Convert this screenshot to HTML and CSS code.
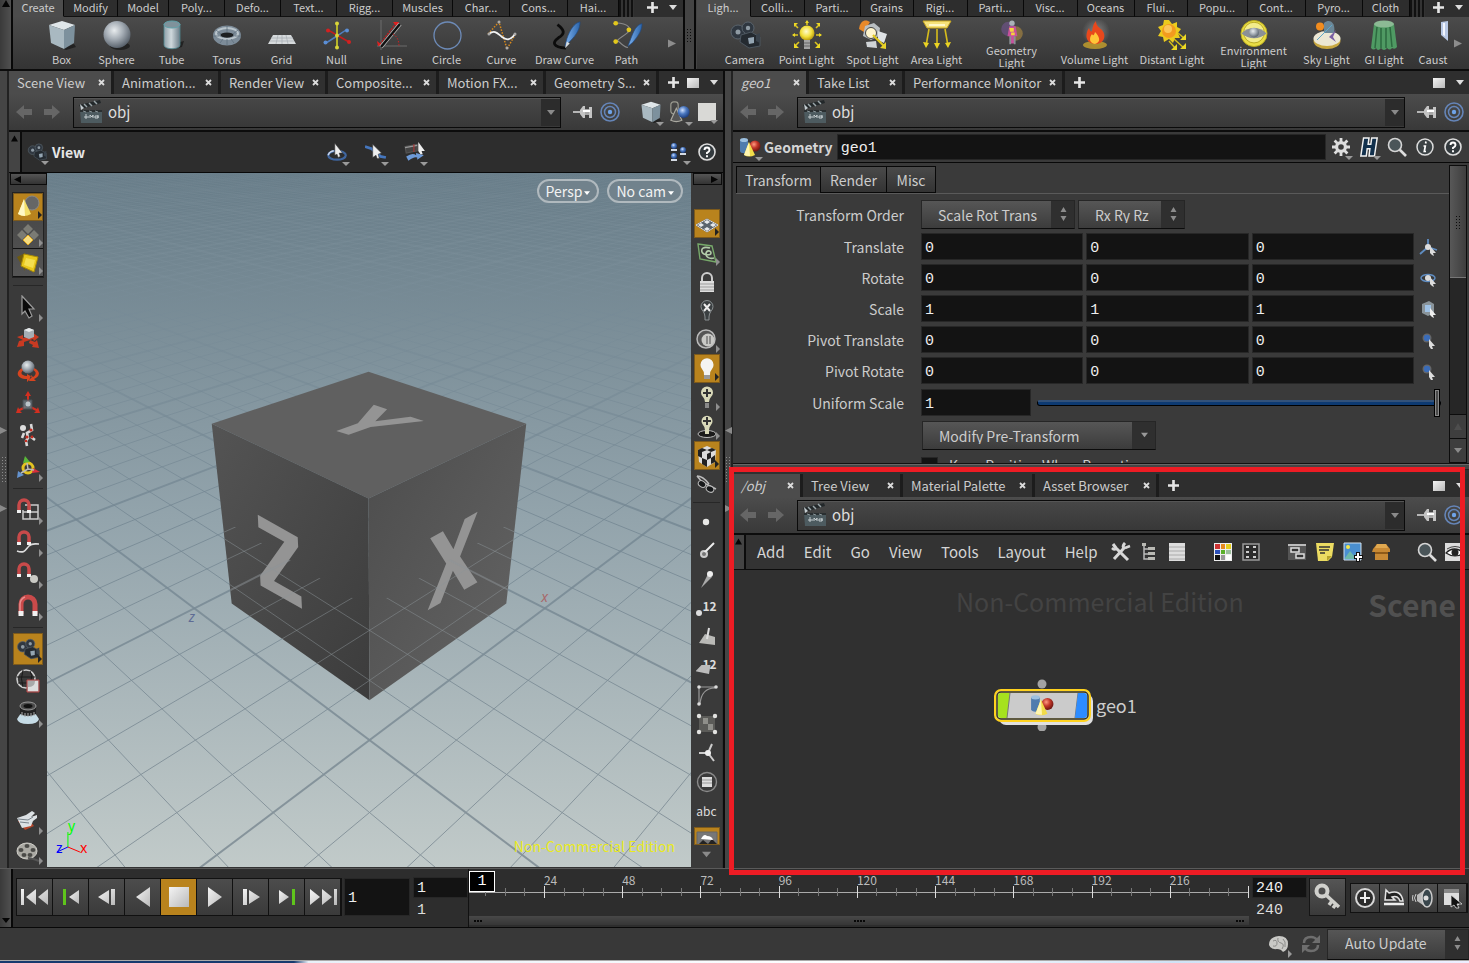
FILE: index.html
```html
<!DOCTYPE html>
<html lang="en">
<head>
<meta charset="utf-8">
<title>geo1</title>
<link rel="stylesheet" href="styles.css">
</head>
<body>
<svg class="sprite" aria-hidden="true">
<defs>
<linearGradient id="steel" x1="0" x2="1"><stop offset="0" stop-color="#8fa0a9"/><stop offset=".45" stop-color="#cfd8dc"/><stop offset="1" stop-color="#6b7d88"/></linearGradient>
<radialGradient id="ball" cx=".4" cy=".35" r=".65"><stop offset="0" stop-color="#e8ecee"/><stop offset=".5" stop-color="#a5adb5"/><stop offset="1" stop-color="#5b646e"/></radialGradient>
<radialGradient id="gold" cx=".45" cy=".4" r=".6"><stop offset="0" stop-color="#fffbd0"/><stop offset=".6" stop-color="#f2df3a"/><stop offset="1" stop-color="#b89a10"/></radialGradient>
<radialGradient id="blueball" cx=".4" cy=".35" r=".65"><stop offset="0" stop-color="#cfe0ff"/><stop offset=".5" stop-color="#4c79c0"/><stop offset="1" stop-color="#1e3f80"/></radialGradient>
<radialGradient id="redball" cx=".4" cy=".35" r=".65"><stop offset="0" stop-color="#ff9a80"/><stop offset=".5" stop-color="#c2372a"/><stop offset="1" stop-color="#6e1510"/></radialGradient>
<linearGradient id="lite" x1="0" y1="0" x2="1" y2="1"><stop offset="0" stop-color="#f4f4f4"/><stop offset="1" stop-color="#b9b9b9"/></linearGradient>
<linearGradient id="pen" x1="0" x2="1"><stop offset="0" stop-color="#7eb2ee"/><stop offset="1" stop-color="#2a63a8"/></linearGradient>
<radialGradient id="glow"><stop offset="0" stop-color="#fff" stop-opacity=".7"/><stop offset="1" stop-color="#fff" stop-opacity="0"/></radialGradient>
</defs>
<symbol id="box" viewBox="0 0 30 30"><path d="M14 28l13-4 2 3-10 3z" fill="#222"/><path d="M2 5L15 1l13 4-11 5z" fill="#dfe6e9"/><path d="M2 5l15 5v19L4 23z" fill="#a9b9c1"/><path d="M17 10l11-5-1 18-10 6z" fill="#7d919d"/></symbol>
<symbol id="sphere" viewBox="0 0 30 30"><ellipse cx="18" cy="26" rx="10" ry="4" fill="#222"/><circle cx="15" cy="14.500" r="13.500" fill="url(#ball)"/></symbol>
<symbol id="tube" viewBox="0 0 30 30"><path d="M15 24l12-3-2 6-8 2z" fill="#222"/><path d="M7 4v21c0 5 16 5 16 0V4z" fill="url(#steel)" stroke="#4e8890" stroke-width=".8"/><ellipse cx="15" cy="4.500" rx="8" ry="3.500" fill="#7f929b" stroke="#5fa0a8"/></symbol>
<symbol id="torus" viewBox="0 0 30 30"><ellipse cx="15" cy="15.500" rx="10" ry="6" fill="none" stroke="#7c8b98" stroke-width="8"/><ellipse cx="15" cy="13.500" rx="11" ry="5.500" fill="none" stroke="#b9c4cb" stroke-width="2"/><ellipse cx="15" cy="15" rx="6.500" ry="2.500" fill="#1d2022"/><path d="M4 10l5 4M15 6v6M26 10l-5 4M8 23l3-4M15 25v-6M22 23l-3-4M1 16h6M23 16h6" stroke="#5e6e7c" stroke-width=".8"/></symbol>
<symbol id="grid" viewBox="0 0 30 30"><path d="M6 15h18l5 9H1z" fill="#d6dadc"/><path d="M4 18h22M3 21h24M11 15l-2 9M15 15v9M19 15l2 9" stroke="#a9b0b5" stroke-width=".8"/></symbol>
<symbol id="null" viewBox="0 0 30 30"><path d="M4 23l11-7 9-6" stroke="#4f7fc0" stroke-width="1.500"/><path d="M6 10l21 12" stroke="#c21d1d" stroke-width="1.500"/><path d="M15 3v25" stroke="#b5b32a" stroke-width="2"/><g fill="#d8d53a"><circle cx="15" cy="3.500" r="2"/><circle cx="15" cy="27.500" r="2"/><circle cx="15" cy="15.500" r="2"/></g><g fill="#d42020"><circle cx="6" cy="10.500" r="2"/><circle cx="27" cy="22" r="2"/></g><g fill="#5b8fd6"><circle cx="3.500" cy="22.500" r="2"/><circle cx="25" cy="10.500" r="2"/></g></symbol>
<symbol id="line" viewBox="0 0 30 30"><path d="M4 0v30M0 26h30" stroke="#777" stroke-width=".8"/><path d="M3 24L20 2" stroke="#b82020" stroke-width="1.500" stroke-dasharray="2 1"/><path d="M16 2h6l-2 5zM0 21l1 5 4-1z" fill="#e02020"/><path d="M4 27L23 4" stroke="#b8b8b8" stroke-width="4"/><path d="M4 27L23 4" stroke="#111" stroke-width="2.500"/><path d="M16 14c4 2 6 7 6 12" fill="none" stroke="#c22" stroke-dasharray="1.500 1.500"/></symbol>
<symbol id="circle" viewBox="0 0 30 30"><circle cx="15.500" cy="15.500" r="13.500" fill="none" stroke="#6d8bb8" stroke-width="1.300"/></symbol>
<symbol id="curve" viewBox="0 0 30 30"><path d="M1 14L12 2l8 27 9-16" fill="none" stroke="#d98a1c" stroke-width="1.500" stroke-dasharray="1.500 1.500"/><path d="M2 14c6-5 9 0 13 3s8 4 13-3" fill="none" stroke="#f2f2f2" stroke-width="1.800"/><g fill="#aaa"><circle cx="2" cy="14" r="1.500"/><circle cx="12" cy="2" r="1.500"/><circle cx="20" cy="28" r="1.500"/><circle cx="28" cy="14" r="1.500"/></g></symbol>
<symbol id="drawcurve" viewBox="0 0 34 30"><path d="M9 4c8 6 8 10 1 14-7 5-6 10 8 11" fill="none" stroke="#0c0c0c" stroke-width="3"/><path d="M33 1c-6 1-11 9-14 18l-2 8 5-5C30 14 33 8 33 1z" fill="url(#pen)" stroke="#1f4a82" stroke-width=".7"/><path d="M17 29l2-7 3 2z" fill="#d8dde0"/></symbol>
<symbol id="path" viewBox="0 0 34 30"><path d="M5 2c14 1 18 6 12 11S5 20 8 22s7 7 10 6" fill="none" stroke="#8a8a8a" stroke-width="1.200"/><path d="M33 3c-6 1-9 8-12 16l-3 8 5-4C30 15 33 9 33 3z" fill="url(#pen)" stroke="#1f4a82" stroke-width=".7"/><g fill="#e3c81c"><circle cx="5" cy="2.500" r="2.500"/><circle cx="19" cy="9.500" r="2.500"/><circle cx="5" cy="22" r="2.500"/></g></symbol>
<symbol id="camera" viewBox="0 0 32 28"><circle cx="9" cy="11" r="7" fill="#2f3740" stroke="#59636c"/><circle cx="19" cy="7" r="6" fill="#2f3740" stroke="#59636c"/><circle cx="9" cy="11" r="2.500" fill="#8e9aa3"/><circle cx="19" cy="7" r="2.200" fill="#8e9aa3"/><path d="M12 14l10-3 9 5v9l-11 2-9-6z" fill="#242a30" stroke="#4c565f"/><path d="M19 17l6-1v6l-5 1z" fill="#94a5b2"/><path d="M27 14l4-2v10l-4-2z" fill="#39424b"/></symbol>
<symbol id="bulb" viewBox="0 0 30 30"><circle cx="15" cy="13" r="7.500" fill="url(#gold)"/><path d="M12 20h6v9h-6z" fill="#a5a5a5"/><path d="M12 23h6M12 26h6" stroke="#666"/><g stroke="#dcc520" stroke-width="1.600"><path d="M15 5V1M6 8L3 5M24 8l3-3M6 15H1M24 15h5M7 22l-4 4M23 22l4 4"/></g><path d="M13 3l2-3 2 3zM3 13l-3 2 3 2zM27 13l3 2-3 2zM2 23v5h5zM28 23v5h-5zM2 7V3h4zM28 7V3h-4z" fill="#ecd824"/></symbol>
<symbol id="spot" viewBox="0 0 30 30"><path d="M1 9C2 0 8-1 12 2L6 12z" fill="#e8892a"/><path d="M7 6l9-3 6 5-1 8-8 4-8-4z" fill="#b9bfc3"/><path d="M20 11l9 3-3 9-6-3z" fill="#dfe3e5"/><path d="M8 22l10-1 1 7-10-1z" fill="#cfd3d6"/><circle cx="13" cy="13" r="5.500" fill="#fff5cc" stroke="#444"/><path d="M15 15l12 12" stroke="#e0c81e" stroke-width="2.200"/><path d="M28 22v7l-6-1z" fill="#e8d22a"/></symbol>
<symbol id="area" viewBox="0 0 30 30"><path d="M1 1h28l-4 7H5z" fill="#f6e27a" stroke="#c9a720"/><path d="M7 4h16v2H7z" fill="#fff8c8"/><path d="M7 9L4 26M15 9v18M23 9l3 17" stroke="#d6bc1c" stroke-width="1.600"/><path d="M1 22l3 6 3-5zM12 23l3 6 3-6zM23 23l3 5 3-6z" fill="#ead324"/></symbol>
<symbol id="geolight" viewBox="0 0 30 30"><circle cx="11" cy="10" r="8" fill="#7b56a0" opacity=".5"/><circle cx="19" cy="15" r="8" fill="#c59a40" opacity=".5"/><path d="M12 7h7l2 11h-3v8h-5v-8h-3z" fill="#c7509c"/><circle cx="15" cy="3.500" r="3" fill="#aab2b8"/><path d="M12 9h5v4h-4zM14 14h4v3h-4z" fill="#f6d33c"/><path d="M12 18h2v9h-2zM17 18h2v9h-2z" fill="#8a8f94"/></symbol>
<symbol id="fire" viewBox="0 0 30 30"><circle cx="16" cy="12" r="14" fill="url(#glow)" opacity=".5"/><ellipse cx="15" cy="25" rx="12" ry="4" fill="#c8a32c" opacity=".8"/><path d="M15 24C5 23 5 14 9 8c1 3 2 4 3 3 1-4 1-7 4-10 0 5 4 7 6 9 5 6 2 14-7 14z" fill="#e8481c"/><path d="M15 24c-6-1-6-6-3-10 1 2 2 2 3-2 4 4 7 10 0 12z" fill="#ffc638"/></symbol>
<symbol id="sun" viewBox="0 0 30 30"><path d="M12 0l3 4 5-2 0 5 4 2-3 4 2 5-5 0-2 5-4-4-5 3-1-5-5-1 3-5-3-4 5-2 1-5z" fill="#eccb1d"/><circle cx="12" cy="11" r="7" fill="#f39b1f"/><circle cx="11" cy="9" r="4" fill="#fbc659"/><path d="M21 13l7 6M17 19l10 9M12 21l6 7" stroke="#d3bd18" stroke-width="1.500"/><path d="M29 14v6h-6zM29 23v6h-6zM20 24v6h-6z" fill="#ecd824"/></symbol>
<symbol id="env" viewBox="0 0 32 30"><circle cx="16" cy="15" r="14.500" fill="#e9dd45" stroke="#b9a91c"/><circle cx="16" cy="14" r="11.500" fill="#f3ec8a" stroke="#b5a620"/><path d="M2 15c8-8 20-8 28 0-8 7-20 7-28 0z" fill="#8b9096"/><circle cx="16" cy="14" r="5.500" fill="url(#ball)"/></symbol>
<symbol id="sky" viewBox="0 0 30 30"><ellipse cx="15" cy="21" rx="13.500" ry="8" fill="#c8a740"/><ellipse cx="15" cy="18.500" rx="13.500" ry="7.500" fill="#ece7d4"/><path d="M12 13V3c6-5 12 0 10 10z" fill="#6b8797"/><path d="M5 20L20 5" stroke="#5fa7c8"/><path d="M24 10l-7 7 7 5-3-5z" fill="#7b5fa3"/><circle cx="8" cy="6.500" r="4" fill="#f28c1e"/></symbol>
<symbol id="gi" viewBox="0 0 30 30"><path d="M5 4l-3 24q3 3 5 0 2 4 5 0 3 4 6 0 3 3 5 0 3 2 5-1L25 4z" fill="#4f9a63"/><path d="M8 7L6 28M12 8v20M17 8v20M21 7l2 20" stroke="#2d6a40" stroke-width="1.500"/><ellipse cx="15" cy="4" rx="10" ry="3.500" fill="#8cba95"/></symbol>
<symbol id="caustic" viewBox="0 0 16 30"><path d="M6 2v13l7 6V1z" fill="#b9c9e6"/><path d="M8 3v12l2 1V3z" fill="#f2f6ff"/></symbol>
<symbol id="plus" viewBox="0 0 10 10"><path d="M3.800 0h2.400v3.800H10v2.400H6.200V10H3.800V6.200H0V3.800h3.800z" fill="#e6e6e6"/></symbol>
<symbol id="x" viewBox="0 0 7 7"><path d="M1 1l5 5M6 1L1 6" stroke="#dcdcdc" stroke-width="1.800"/></symbol>
<symbol id="down" viewBox="0 0 8 5"><path d="M0 0h8L4 5z" fill="currentColor"/></symbol>
<symbol id="up" viewBox="0 0 8 7"><path d="M0 7h8L4 0z" fill="currentColor"/></symbol>
<symbol id="right" viewBox="0 0 8 8"><path d="M0 0l8 4-8 4z" fill="currentColor"/></symbol>
<symbol id="left" viewBox="0 0 8 8"><path d="M8 0L0 4l8 4z" fill="currentColor"/></symbol>
<symbol id="updown" viewBox="0 0 6 14"><path d="M0 5h6L3 0zM0 9h6l-3 5z" fill="#8c8c8c"/></symbol>
<symbol id="win" viewBox="0 0 12 10"><path d="M0 0h12v10H0z" fill="url(#lite)"/></symbol>
<symbol id="back" viewBox="0 0 18 18"><path d="M1 9l8-7v4h8v6H9v4z" fill="#666"/></symbol>
<symbol id="fwd" viewBox="0 0 18 18"><path d="M17 9L9 2v4H1v6h8v4z" fill="#666"/></symbol>
<symbol id="clap" viewBox="0 0 24 24"><path d="M1 10h22v13H2z" fill="#4d5b60"/><path d="M1 10h22v2H1z" fill="#2a2f31"/><path d="M0 5l21-5 1 3L2 9z" fill="#23282a"/><path d="M5 4l3 3M10 3l3 3M15 1l3 3" stroke="#9aa5a9" stroke-width="1.500"/><path d="M1 4l4 4-3 2z" fill="#c4ccd0"/><path d="M4 11l3 1M10 11l3 1M16 11l3 1" stroke="#8b979b"/><path d="M5 17h5M7 14v5M11 18v-3l2 2 1-2v3M16 16h3v2h-3zM19 15v3" stroke="#c5cdcf" fill="none"/></symbol>
<symbol id="pin" viewBox="0 0 20 16"><path d="M0 8h8" stroke="#ddd" stroke-width="1.500"/><path d="M7 6l3-4h2v12h-2l-3-4z" fill="#c4c4c4"/><path d="M12 5h4v6h-4z" fill="#a8a8a8"/><path d="M16 3h3v11h-3z" fill="#c4c4c4"/><path d="M10 6h7v2h-7z" fill="#fff"/></symbol>
<symbol id="target" viewBox="0 0 20 20"><circle cx="10" cy="10" r="9" fill="none" stroke="#6585b8" stroke-width="1.600"/><circle cx="10" cy="10" r="5.500" fill="none" stroke="#6585b8" stroke-width="1.500"/><circle cx="10" cy="10" r="2.200" fill="#6fa3e8"/></symbol>
<symbol id="shapes" viewBox="0 0 24 24"><rect x="2" y="1" width="8" height="13" rx="3" fill="none" stroke="#9a9a90" stroke-width="1.300"/><path d="M8 8l6 13q-6 3-12 0z" fill="#555" stroke="#aaa9a0" stroke-width="1.300"/><circle cx="16" cy="12" r="6.500" fill="url(#blueball)"/></symbol>
<symbol id="square" viewBox="0 0 20 20"><path d="M0 0h20v20H0z" fill="#d9d9d6"/></symbol>
<symbol id="orbit" viewBox="0 0 20 20"><ellipse cx="10" cy="13" rx="8" ry="4" fill="none" stroke="#3f66a0" stroke-width="2"/><path d="M2 13c1-4 5-4 5-4" stroke="#ccd8ec" stroke-width="1.500" fill="none"/><path d="M8 2l7 9-3 0 1 3-2 1-1-3-2 1z" fill="#eee" stroke="#333" stroke-width=".5"/></symbol>
<symbol id="pan" viewBox="0 0 20 20"><path d="M0 5l6 2 8 7 5 1" fill="none" stroke="#4576bd" stroke-width="2.500"/><path d="M7 3l8 8-3 1 1 4-2 0-1-3-3 2z" fill="#eee" stroke="#333" stroke-width=".5"/></symbol>
<symbol id="dolly" viewBox="0 0 20 20"><path d="M1 5l11-2v6L2 11z" fill="#444" stroke="#555"/><path d="M1 6l11-2" stroke="#999"/><path d="M9 3v7" stroke="#a33"/><path d="M2 14q6-4 9-1l0-2 7 2-6 4v-2q-3-1-8 3z" fill="#6d9ad8"/><path d="M13 1l6 8-3 0 1 3-2 0-2-3z" fill="#eee"/></symbol>
<symbol id="people" viewBox="0 0 20 20"><g fill="url(#blueball)"><circle cx="5" cy="4" r="3"/><circle cx="5" cy="14" r="3"/><circle cx="14" cy="8" r="3"/></g><path d="M2 7h6v2H2zM2 17h6v2H2zM11 11h6v2h-6z" fill="#d5dbe3"/></symbol>
<symbol id="help" viewBox="0 0 20 20"><circle cx="10" cy="10" r="8" fill="#333a3e" stroke="#ddd" stroke-width="1.600"/><path d="M7.500 8q0-2.500 2.500-2.500T12.500 8q0 1.500-2.500 2.800V12M10 13.200v2" fill="none" stroke="#fff" stroke-width="1.900"/></symbol>
<symbol id="info" viewBox="0 0 20 20"><circle cx="10" cy="10" r="8" fill="#3c4346" stroke="#ddd" stroke-width="1.500"/><path d="M11 4.500l-.4 2M8.500 9h1.800l-1 5.500h1.700" fill="none" stroke="#fff" stroke-width="1.700"/></symbol>
<symbol id="search" viewBox="0 0 20 20"><path d="M12 12l7 7" stroke="#ddd" stroke-width="2.600"/><circle cx="8" cy="8" r="6.500" fill="#4a5559" stroke="#d5d5d5" stroke-width="1.600"/></symbol>
<symbol id="gear" viewBox="0 0 20 20"><path d="M10 1v18M1 10h18M3.600 3.600l12.800 12.800M16.400 3.600L3.600 16.400" stroke="#dedede" stroke-width="2.800"/><circle cx="10" cy="10" r="6" fill="#dedede"/><circle cx="10" cy="10" r="2.800" fill="#3c3c3c"/></symbol>
<symbol id="hmark" viewBox="0 0 20 22"><path d="M4 1h6l-1 7h3l1-7h6l-3 20h-6l1-8H8l-1 8H1z" fill="#12304c" stroke="#f2f2f2" stroke-width="1.600"/></symbol>
<symbol id="geo" viewBox="0 0 22 20"><path d="M1 3v11c0 3 8 3 8 0V3z" fill="#4f7cae"/><ellipse cx="5" cy="3" rx="4" ry="2" fill="#9cc0e0"/><circle cx="16" cy="9" r="5.500" fill="url(#redball)"/><path d="M10 5l6 13q-6 3-11 0z" fill="#f2dc4a"/><path d="M10 5l1 14q-4 0-6-1z" fill="#fff6b0"/></symbol>
<symbol id="objmode" viewBox="0 0 24 24"><circle cx="16" cy="8" r="7" fill="#666" stroke="#888"/><path d="M8 4l7 15q-7 4-13 0z" fill="#f4df67"/><path d="M8 4l1 17q-4 0-7-2z" fill="#fff8c4"/></symbol>
<symbol id="diam" viewBox="0 0 24 24"><path d="M12 1l5 5-5 5-5-5zM6 7l5 5-5 5-5-5zM18 7l5 5-5 5-5-5z" fill="#7b7b74"/><path d="M12 12l5 5-5 5-5-5z" fill="#f6dc80" stroke="#e0a820"/></symbol>
<symbol id="ybox" viewBox="0 0 24 24"><path d="M1 6l8-4v18z" fill="#6e5b10"/><path d="M8 3l14 3-4 15-13-6z" fill="#e9c81c" stroke="#a88a08"/><path d="M10 7l9 2-2 8-9-3z" fill="#f4df50"/></symbol>
<symbol id="arrow" viewBox="0 0 24 24"><path d="M6 1l12 13-5 0 3 7-3 2-4-7-3 3z" fill="#0a0a0a" stroke="#9a9a9a" stroke-width="1.200"/></symbol>
<symbol id="move" viewBox="0 0 24 24"><path d="M1 10l6-2 0 3 10-2 0-3 6 4-5 4-1-2-9 3 0 4-7 1 2-6 4-1zM14 13l5 2 2-2 2 8-7-1 1-2-4-2z" fill="#c93a22"/><path d="M8 3l5-2 5 2v7l-5 2-5-2z" fill="#a5adb4"/><path d="M8 3l5 2 5-2-5-2z" fill="#e6eaec"/></symbol>
<symbol id="rotate" viewBox="0 0 24 24"><path d="M6 9c-8 5-4 11 5 11l0 3 5-5-5-3v2c-5 0-8-3-3-6zM18 9c8 4 5 9 0 11l2 2-7 0 2-6 2 2c3-2 4-5 0-7z" fill="#d6441f"/><circle cx="12" cy="8" r="6.500" fill="url(#ball)"/></symbol>
<symbol id="scale" viewBox="0 0 24 24"><path d="M12 0l3 5h-2v8h-2V5H9zM0 22l2-6 1 2 6-3 1 2-6 3 2 2zM24 22l-2-6-1 2-6-3-1 2 6 3-2 2z" fill="#d32f20"/><path d="M7 9h9v9H7z" fill="#6c767e" opacity=".85" stroke="#4a5258"/><circle cx="12" cy="13" r="2.500" fill="#bcc4ca"/></symbol>
<symbol id="pose" viewBox="0 0 24 24"><circle cx="7" cy="5" r="3" fill="#ddd"/><path d="M15 1l1 6-5 3 1 5-2 3 1 5M15 14l4 3M8 10l-2 5" fill="none" stroke="#d8d8d8" stroke-width="2.600"/><g fill="#c82c20"><circle cx="15" cy="7" r="1.600"/><circle cx="11" cy="14" r="1.600"/><circle cx="16" cy="14" r="1.400"/><circle cx="10" cy="18" r="1.300"/></g></symbol>
<symbol id="handles" viewBox="0 0 24 24"><circle cx="12" cy="13" r="5" fill="none" stroke="#e3c321" stroke-width="3"/><path d="M9 1l5 6-7 1z" fill="#59b839"/><path d="M24 17l-7-4-1 5z" fill="#d8313a"/><path d="M1 23l1-7 6 4z" fill="#6493cf"/><path d="M11 8l1 6-7 4M12 14l6 1" stroke="#bbb" stroke-width="1.500" fill="none"/></symbol>
<symbol id="mag" viewBox="0 0 24 24"><path d="M5 20V10a7 7 0 0 1 14 0v10" fill="none" stroke="#c94a4a" stroke-width="5"/><path d="M4 19V10a8 8 0 0 1 5-7" fill="none" stroke="#e89090" stroke-width="1.500"/><path d="M2.500 17h5v5h-5zM16.500 17h5v5h-5z" fill="#f1f1f1"/></symbol>
<symbol id="maggrid" viewBox="0 0 24 24"><path d="M9 7h13v14H7V12M7 14h15M14 7v14" fill="none" stroke="#ccc" stroke-width="1.500"/><path d="M3 13V7a5 5 0 0 1 10 0v6" fill="none" stroke="#c94a4a" stroke-width="3.500"/><path d="M1 12h4v3H1zM11 12h4v3h-4z" fill="#f1f1f1"/></symbol>
<symbol id="magcurve" viewBox="0 0 24 24"><path d="M1 21c8 3 9-2 12-5s5-2 10-2" fill="none" stroke="#ddd" stroke-width="1.600"/><path d="M3 13V7a5 5 0 0 1 10 0v6" fill="none" stroke="#c94a4a" stroke-width="3.500"/><path d="M1 12h4v3H1zM11 12h4v3h-4z" fill="#f1f1f1"/></symbol>
<symbol id="magpt" viewBox="0 0 24 24"><path d="M3 13V7a5 5 0 0 1 10 0v6" fill="none" stroke="#c94a4a" stroke-width="3.500"/><path d="M1 12h4v3H1zM11 12h4v3h-4z" fill="#f1f1f1"/><circle cx="18" cy="17" r="4" fill="#c9c9c4"/></symbol>
<symbol id="globe" viewBox="0 0 24 24"><circle cx="10" cy="10" r="9" fill="none" stroke="#ccc" stroke-width="1.600"/><path d="M1 8h18M2 14h10M7 1q-3 9 0 17M14 2q3 5 1 9" fill="none" stroke="#1a1a1a"/><path d="M11 11h12v12H11z" fill="#a9a9a9" stroke="#b44"/><path d="M12 18q7 0 7-6h3v10H12z" fill="#ddd"/></symbol>
<symbol id="lens" viewBox="0 0 24 24"><path d="M5 12h14l4 6q-1 5-11 5T1 18z" fill="#c6dce6"/><path d="M4 5v8q8 4 16 0V5z" fill="#222"/><ellipse cx="12" cy="5" rx="8" ry="4" fill="#4a4a4a" stroke="#999"/><ellipse cx="12" cy="5" rx="4.500" ry="2" fill="#111"/><path d="M6 11v4M9 12v4M12 12v4M15 12v4M18 11v4" stroke="#aaa"/></symbol>
<symbol id="flip" viewBox="0 0 24 24"><path d="M2 12l7 9 9-4-7-9z" fill="#b3452a"/><path d="M1 9l9-3 6-4 3 2-4 4 6-2 0 3-4 3-2 5-9 2z" fill="#dce1e4"/><path d="M2 10l10 1 5-3M4 13l9 1" stroke="#78828a" fill="none"/></symbol>
<symbol id="reel" viewBox="0 0 24 24"><ellipse cx="11" cy="12" rx="10" ry="8" fill="#aaa9a3" stroke="#d0cfc9"/><path d="M12 19q7 1 11 3" stroke="#555" stroke-width="2"/><g fill="#4b4b48"><ellipse cx="11" cy="7" rx="2.500" ry="2"/><ellipse cx="5" cy="11" rx="2.500" ry="2"/><ellipse cx="17" cy="11" rx="2.500" ry="2"/><ellipse cx="8" cy="16" rx="2.500" ry="2"/><ellipse cx="14" cy="16" rx="2.500" ry="2"/></g></symbol>
<symbol id="plane" viewBox="0 0 24 24"><path d="M12 7l11 6-11 7-11-7z" fill="#5a646d" stroke="#222"/><path d="M12 8l3 2-3 2-3-2zM6 11l3 2-3 2-3-2zM18 11l3 2-3 2-3-2zM12 15l3 2-3 2-3-2z" fill="#e8eaec"/><path d="M12 7l11 6-11 7-11-7z" fill="none" stroke="#e4e4e4"/></symbol>
<symbol id="cgrid" viewBox="0 0 24 24"><path d="M3 3l14 2 4 16-16-3z" fill="none" stroke="#77a96a" stroke-width="1.400"/><path d="M15 7c-7-2-9 1-8 4s9 4 9 1-5-3-5 1 5 5 8 4" fill="none" stroke="#b2cbaa" stroke-width="1.600"/></symbol>
<symbol id="lock" viewBox="0 0 24 24"><path d="M7 12V8a5 5 0 0 1 10 0v4" fill="none" stroke="#ccc" stroke-width="2"/><path d="M5 11h14v11H5z" fill="#dedede"/><path d="M5 14h14M5 17h14M5 20h14" stroke="#9d9d9d"/></symbol>
<symbol id="bulboff" viewBox="0 0 24 24"><path d="M10 18q0-3-2-6a6 6 0 1 1 8 0q-2 3-2 6v3h-4z" fill="#3a3f41" stroke="#8a9092"/><path d="M9 5l6 7M15 5l-6 7" stroke="#eee" stroke-width="2"/></symbol>
<symbol id="disc" viewBox="0 0 24 24"><circle cx="11" cy="11" r="9" fill="#555" stroke="#b9b9b9" stroke-width="1.500"/><circle cx="13" cy="12" r="6.500" fill="#c9c9c6"/><path d="M12 8v8M15 8v8" stroke="#777" stroke-width="1.500"/></symbol>
<symbol id="bulbon" viewBox="0 0 24 24"><path d="M9 18q0-4-2-6a6.500 6.500 0 1 1 10 0q-2 2-2 6z" fill="#f4f4f2"/><path d="M9 18h6v4H9z" fill="#999"/></symbol>
<symbol id="bulbplus" viewBox="0 0 24 24"><path d="M10 16q0-3-2-5a6 6 0 1 1 8 0q-2 2-2 5z" fill="#d8d8b8"/><path d="M10 17h4v5h-4z" fill="#888"/><path d="M12 3v8M8 7h8" stroke="#333" stroke-width="2"/></symbol>
<symbol id="bulbring" viewBox="0 0 24 24"><ellipse cx="12" cy="19" rx="9" ry="3.500" fill="#1a1a1a" stroke="#bbb"/><path d="M10 15q0-3-2-5a5.500 5.500 0 1 1 8 0q-2 2-2 5v4h-4z" fill="#d8d8b8"/><path d="M12 2v8M8 6h8" stroke="#333" stroke-width="2"/></symbol>
<symbol id="checker" viewBox="0 0 24 24"><path d="M3 6l9-4 9 4-1 12-8 5-8-5z" fill="#ddd"/><path d="M3 6l4 2v6l-4-2zM7 14l5 2v7l-5-3zM12 10l4-2v6l-4 2zM16 14l4-3v7l-4 2zM7 4l5 2 5-2 4 2-5 2-4-2-5 2-4-2z" fill="#222"/></symbol>
<symbol id="glasses" viewBox="0 0 24 24"><path d="M2 3l5 6 14 7M2 3q6 0 12 8" fill="none" stroke="#bbb" stroke-width="1.500"/><ellipse cx="7" cy="11" rx="4" ry="3" fill="#16181a" stroke="#bbb" transform="rotate(35 7 11)"/><ellipse cx="15" cy="16" rx="4" ry="3" fill="#16181a" stroke="#bbb" transform="rotate(25 15 16)"/></symbol>
<symbol id="pt" viewBox="0 0 24 24"><circle cx="11" cy="13" r="3.200" fill="#e8e8e6"/></symbol>
<symbol id="norm" viewBox="0 0 24 24"><circle cx="9" cy="16" r="4" fill="#ccc"/><path d="M8 16L19 5" stroke="#eee" stroke-width="2"/><circle cx="9" cy="16" r="2" fill="#777"/></symbol>
<symbol id="vel" viewBox="0 0 24 24"><path d="M6 21L13 7l4 3z" fill="#aaa"/><circle cx="15" cy="7" r="3" fill="#eee"/></symbol>
<symbol id="prim" viewBox="0 0 24 24"><path d="M4 18l6-9 10 3v8z" fill="#b9b9b6"/><path d="M12 14l2-11" stroke="#ddd" stroke-width="2"/></symbol>
<symbol id="edge" viewBox="0 0 24 24"><path d="M4 22V4h17M5 21C6 10 12 5 20 5" fill="none" stroke="#999" stroke-width="1.200"/><circle cx="4" cy="4" r="1.800" fill="#ddd"/><circle cx="21" cy="4" r="1.800" fill="#ddd"/><circle cx="4" cy="21" r="1.800" fill="#ddd"/></symbol>
<symbol id="uv" viewBox="0 0 24 24"><path d="M4 4h16v16H4z" fill="#5b5b58"/><path d="M8 6h5v6H8zM13 12h5v6h-5z" fill="#8f8f8a"/><g fill="#e2e2e0"><circle cx="4" cy="4" r="2.200"/><circle cx="20" cy="4" r="2.200"/><circle cx="4" cy="20" r="2.200"/><circle cx="20" cy="20" r="2.200"/></g></symbol>
<symbol id="tri" viewBox="0 0 24 24"><path d="M13 12L17 3M13 12H4M13 12l6 8" stroke="#ccc" stroke-width="2"/><circle cx="13" cy="12" r="3" fill="#eee"/></symbol>
<symbol id="film" viewBox="0 0 24 24"><circle cx="12" cy="12" r="9.500" fill="none" stroke="#8a8a8a" stroke-width="1.400"/><path d="M7 7h10v10H7z" fill="#ddd"/><path d="M7 10h10M7 13h10" stroke="#999"/></symbol>
<symbol id="photo" viewBox="0 0 24 24"><path d="M2 4h20v20H2z" fill="#777" stroke="#666"/><path d="M3 17l5-5 5 4 4-5 5 5v8H3z" fill="#222"/><path d="M6 11q3-6 6-3 5 0 6 4z" fill="#fff"/></symbol>
<symbol id="taxis" viewBox="0 0 20 20"><path d="M10 2v8l-8 7M10 10l9 3" fill="none" stroke="#5f8cc0" stroke-width="1.800"/><circle cx="10" cy="10" r="3" fill="#ddd"/><path d="M12 9l6 7-3 0 1 3-2-1-2-2z" fill="#ddd"/></symbol>
<symbol id="tring" viewBox="0 0 20 20"><ellipse cx="10" cy="10" rx="7" ry="3.500" fill="none" stroke="#5f8cc0" stroke-width="1.500"/><circle cx="10" cy="10" r="3" fill="#ddd"/><path d="M12 9l6 7-3 0 1 3-2-1-2-2z" fill="#ddd"/></symbol>
<symbol id="tbox" viewBox="0 0 20 20"><path d="M4 5l7-3 5 3v9l-6 3-6-3z" fill="#8a949a"/><path d="M7 6h6v7H7z" fill="#9fc2e6"/><path d="M12 9l6 7-3 0 1 3-2-1-2-2z" fill="#eee"/></symbol>
<symbol id="tpiv" viewBox="0 0 20 20"><circle cx="9" cy="8" r="4.500" fill="#666"/><circle cx="9" cy="8" r="3.200" fill="#3a6cb8"/><path d="M11 9l6 7-3 0 1 3-2 0-2-3z" fill="#ddd"/></symbol>
<symbol id="tools" viewBox="0 0 20 20"><path d="M2 2l3 4 12 12M14 1q-3 3-1 5L3 17" fill="none" stroke="#d8d8d8" stroke-width="3"/><path d="M14 6l5-2M1 6q3 3 5 0" stroke="#d8d8d8" stroke-width="2.500" fill="none"/></symbol>
<symbol id="tree" viewBox="0 0 20 20"><path d="M5 2v15h5M5 7h5M5 12h5" stroke="#bbb" stroke-width="1.500" fill="none"/><path d="M3 1h4v3H3zM9 5h7v3H9zM9 10h7v3H9zM9 15h7v3H9z" fill="#b9b9b4"/></symbol>
<symbol id="list" viewBox="0 0 20 20"><path d="M2 1h16v18H2z" fill="#ddd"/><path d="M2 5h16M2 9h16M2 13h16M2 17h16" stroke="#aaa"/></symbol>
<symbol id="palette" viewBox="0 0 20 20"><path d="M1 1h18v18H1z" fill="#eee"/><path d="M2 2h5v5H2z" fill="#c33"/><path d="M8 2h4v5H8z" fill="#e58a1e"/><path d="M13 2h5v5h-5z" fill="#e5cf1e"/><path d="M2 8h5v4H2z" fill="#2b4fb8"/><path d="M8 8h4v4H8z" fill="#5ab02a"/><path d="M13 8h5v4h-5z" fill="#9bbf9b"/><path d="M2 13h5v5H2z" fill="#111"/><path d="M8 13h4v5H8z" fill="#999"/><path d="M13 13h5v5h-5z" fill="#fff"/></symbol>
<symbol id="table" viewBox="0 0 20 20"><path d="M2 2h16v16H2z" fill="#2b2b2b" stroke="#999" stroke-width="1.500"/><path d="M5 5h3M12 5h3M5 10h3M12 10h3M5 15h3M12 15h3" stroke="#ccc" stroke-width="2"/></symbol>
<symbol id="netbox" viewBox="0 0 20 20"><path d="M1 2h18v16H1z" fill="#555"/><path d="M1 2h18v2H1z" fill="#bbb"/><path d="M4 6h8v4H4zM9 12h8v4H9z" fill="#333" stroke="#ddd" stroke-width="1.500"/></symbol>
<symbol id="note" viewBox="0 0 20 20"><path d="M1 1h18l-2 14-4 4H3z" fill="#ecdc62"/><path d="M17 14l-5 0 0 5z" fill="#b6a32a"/><path d="M4 5h11M4 8h10M5 11h5" stroke="#333" stroke-width="1.500"/></symbol>
<symbol id="pic" viewBox="0 0 20 20"><path d="M1 1h17v17H1z" fill="#4a8fd0" stroke="#cfe0ee"/><path d="M2 16l5-7 4 5 3-4 4 6v1H2z" fill="#6db8a8"/><circle cx="5" cy="5" r="2" fill="#f4e84a"/><path d="M15 10v10M11 15h9" stroke="#111" stroke-width="4"/><path d="M15 11v8M12 15h7" stroke="#fff" stroke-width="2"/></symbol>
<symbol id="package" viewBox="0 0 20 20"><path d="M2 7l4-5h9l4 5v3h-2v8H4v-8H1z" fill="#c98a35"/><path d="M6 2h9l2 4H4z" fill="#e0a850"/><path d="M4 10h13v2H4z" fill="#8f5a18"/></symbol>
<symbol id="eye" viewBox="0 0 20 20"><path d="M0 1h20v18H0z" fill="#ddd"/><path d="M1 11q8-8 18 0-9 6-18 0z" fill="#fff" stroke="#222" stroke-width="1.200"/><path d="M2 7q8-5 16 0" fill="none" stroke="#444"/><circle cx="10" cy="10.500" r="3.500" fill="#222"/></symbol>
<symbol id="p-first" viewBox="0 0 30 24"><path d="M1 4h3v16H1zM16 4v16L6 12zM28 4v16l-10-8z" fill="url(#lite)"/></symbol>
<symbol id="p-prevkey" viewBox="0 0 30 24"><path d="M7 4h3v16H7z" fill="#5fc41c"/><path d="M23 5v14l-10-7z" fill="url(#lite)"/></symbol>
<symbol id="p-stepb" viewBox="0 0 30 24"><path d="M17 5v14L6 12zM19 4h4v16h-4z" fill="url(#lite)"/></symbol>
<symbol id="p-playb" viewBox="0 0 30 24"><path d="M22 2v20L8 12z" fill="url(#lite)"/></symbol>
<symbol id="p-stop" viewBox="0 0 30 24"><path d="M5 2h20v20H5z" fill="url(#lite)"/></symbol>
<symbol id="p-play" viewBox="0 0 30 24"><path d="M8 2v20l14-10z" fill="url(#lite)"/></symbol>
<symbol id="p-stepf" viewBox="0 0 30 24"><path d="M13 5v14l11-7zM7 4h4v16H7z" fill="url(#lite)"/></symbol>
<symbol id="p-nextkey" viewBox="0 0 30 24"><path d="M20 4h3v16h-3z" fill="#5fc41c"/><path d="M7 5v14l10-7z" fill="url(#lite)"/></symbol>
<symbol id="p-last" viewBox="0 0 30 24"><path d="M26 4h3v16h-3zM14 4v16l10-8zM2 4v16l10-8z" fill="url(#lite)"/></symbol>
<symbol id="key" viewBox="0 0 28 28"><circle cx="8" cy="8" r="5.500" fill="none" stroke="#d0d0cc" stroke-width="4"/><path d="M12 12l13 12M18 18l-3 4M22 21l-3 4" stroke="#d0d0cc" stroke-width="3.500"/></symbol>
<symbol id="clock" viewBox="0 0 22 22"><circle cx="11" cy="11" r="9" fill="#2c2c2c" stroke="#d8d8d8" stroke-width="2"/><path d="M11 5v11M6 11h10" stroke="#eee" stroke-width="2"/></symbol>
<symbol id="undo" viewBox="0 0 22 22"><path d="M2 13h10L9 10q6-2 8 4h3Q18 2 6 6L3 3z" fill="#222" stroke="#e2e2e2" stroke-width="1.500"/><path d="M1 17h20" stroke="#eee" stroke-width="2.500"/></symbol>
<symbol id="speaker" viewBox="0 0 22 22"><path d="M5 8l9-6v18l-9-6z" fill="#bbb"/><ellipse cx="15" cy="11" rx="5" ry="9" fill="#39464c" stroke="#ccc" stroke-width="1.500"/><circle cx="14" cy="11" r="2.500" fill="#ddd"/><path d="M4 7q-3 4 0 8M1 8q-1 3 0 6" stroke="#ccc" fill="none"/></symbol>
<symbol id="panel" viewBox="0 0 22 22"><path d="M3 2h15v16H3z" fill="#ddd"/><path d="M3 2h15v4H3z" fill="#888"/><path d="M10 8l11 9-5 0 2 4-3 0-2-3-3 2z" fill="#111" stroke="#ddd" stroke-width=".8"/></symbol>
<symbol id="brain" viewBox="0 0 22 18"><path d="M1 10Q1 2 11 1q9 0 9 8 0 6-5 8-2-3-6-3-6 1-8-4z" fill="#c9c9c6"/><path d="M5 6q4-2 4 2T5 11M10 3q-1 4 3 5t1 6M15 4q3 2 2 8" stroke="#8a8a88" fill="none"/></symbol>
<symbol id="refresh" viewBox="0 0 20 20"><path d="M3 9q0-6 7-6 4 0 6 3M17 11q0 6-7 6-4 0-6-3" fill="none" stroke="#6e6e6e" stroke-width="2.500"/><path d="M19 1v8h-8zM1 19v-8h8z" fill="#6e6e6e"/></symbol>
</svg>

<header class="shelves">
  <div class="edge"><svg class="a8 dark"><use href="#up"/></svg></div>
  <section class="shelf shelf-a">
    <nav class="stabs">
      <button class="on w51">Create</button><button class="w54">Modify</button><button class="w51">Model</button><button class="w56">Poly...</button><button class="w56">Defo...</button><button class="w56">Text...</button><button class="w56">Rigg...</button><button class="w60">Muscles</button><button class="w57">Char...</button><button class="w58">Cons...</button><button class="w51">Hai...</button><i class="ridge"></i>
      <span class="sadd"><svg class="a10"><use href="#plus"/></svg><svg class="tri"><use href="#down"/></svg></span>
    </nav>
    <div class="tools tools-a">
      <button><svg><use href="#box"/></svg>Box</button><button><svg><use href="#sphere"/></svg>Sphere</button><button><svg><use href="#tube"/></svg>Tube</button><button><svg><use href="#torus"/></svg>Torus</button><button><svg><use href="#grid"/></svg>Grid</button><button><svg><use href="#null"/></svg>Null</button><button><svg><use href="#line"/></svg>Line</button><button><svg><use href="#circle"/></svg>Circle</button><button><svg><use href="#curve"/></svg>Curve</button><button><svg><use href="#drawcurve"/></svg>Draw Curve</button><button><svg><use href="#path"/></svg>Path</button>
      <svg class="more"><use href="#right"/></svg>
    </div>
  </section>
  <div class="grip"><i class="dots"></i></div>
  <section class="shelf shelf-b">
    <nav class="stabs">
      <button class="on w54">Ligh...</button><button class="w54">Colli...</button><button class="w56">Parti...</button><button class="w53">Grains</button><button class="w54">Rigi...</button><button class="w56">Parti...</button><button class="w54">Visc...</button><button class="w57">Oceans</button><button class="w53">Flui...</button><button class="w60">Popu...</button><button class="w58">Cont...</button><button class="w57">Pyro...</button><button class="w47">Cloth</button><i class="ridge"></i>
      <span class="sadd"><svg class="a10"><use href="#plus"/></svg><svg class="tri"><use href="#down"/></svg></span>
    </nav>
    <div class="tools tools-b">
      <button><svg><use href="#camera"/></svg>Camera</button><button><svg><use href="#bulb"/></svg>Point Light</button><button><svg><use href="#spot"/></svg>Spot Light</button><button><svg><use href="#area"/></svg>Area Light</button><button class="two"><svg><use href="#geolight"/></svg><span>Geometry<br>Light</span></button><button><svg><use href="#fire"/></svg>Volume Light</button><button><svg><use href="#sun"/></svg>Distant Light</button><button class="two"><svg><use href="#env"/></svg><span>Environment<br>Light</span></button><button><svg><use href="#sky"/></svg>Sky Light</button><button><svg><use href="#gi"/></svg>GI Light</button><button class="cut"><svg><use href="#caustic"/></svg>Caust</button>
      <svg class="more"><use href="#right"/></svg>
    </div>
  </section>
</header>

<main class="desk">
  <div class="rail"><svg class="a6"><use href="#right"/></svg><i class="dots pale"></i><svg class="a6"><use href="#right"/></svg></div>
  <section class="pane scene">
    <nav class="ptabs">
      <button class="on w104">Scene View<svg><use href="#x"/></svg></button><button class="w107">Animation...<svg><use href="#x"/></svg></button><button class="w107">Render View<svg><use href="#x"/></svg></button><button class="w111">Composite...<svg><use href="#x"/></svg></button><button class="w107">Motion FX...<svg><use href="#x"/></svg></button><button class="w113">Geometry S...<svg><use href="#x"/></svg></button><svg class="add"><use href="#plus"/></svg>
      <span class="wins"><svg class="win"><use href="#win"/></svg><svg class="tri"><use href="#down"/></svg></span>
    </nav>
    <div class="pathbar">
      <svg class="nav"><use href="#back"/></svg><svg class="nav"><use href="#fwd"/></svg>
      <button class="path"><svg class="clap"><use href="#clap"/></svg>obj<span class="drop"><svg class="tri"><use href="#down"/></svg></span></button>
      <svg class="i20 pin"><use href="#pin"/></svg><svg class="i20"><use href="#target"/></svg>
      <span class="vicons"><span class="m"><svg class="i22"><use href="#box"/></svg></span><span class="m"><svg class="i22"><use href="#shapes"/></svg></span><span class="m"><svg class="i18"><use href="#square"/></svg></span></span>
    </div>
    <div class="viewbar">
      <div class="grip2"><svg class="a6 dark"><use href="#up"/></svg></div>
      <span class="m cam"><svg class="i20"><use href="#camera"/></svg></span><b>View</b>
      <span class="mid"><span class="m"><svg class="i22"><use href="#orbit"/></svg></span><span class="m"><svg class="i22"><use href="#pan"/></svg></span><span class="m"><svg class="i22"><use href="#dolly"/></svg></span></span>
      <span class="m"><svg class="i20"><use href="#people"/></svg></span><svg class="i20"><use href="#help"/></svg>
    </div>
    <div class="stage">
      <div class="tbar ltb">
        <div class="head"><svg class="a6 dark"><use href="#left"/></svg></div>
        <div class="modes"><button class="act s"><svg><use href="#objmode"/></svg></button><button class="s"><svg><use href="#diam"/></svg></button><button class="s"><svg><use href="#ybox"/></svg></button></div>
        <hr>
        <button class="s"><svg><use href="#arrow"/></svg></button><button><svg><use href="#move"/></svg></button><button><svg><use href="#rotate"/></svg></button><button><svg><use href="#scale"/></svg></button><button><svg><use href="#pose"/></svg></button><button class="s"><svg><use href="#handles"/></svg></button>
        <hr>
        <button class="s"><svg><use href="#maggrid"/></svg></button><button class="s"><svg><use href="#magcurve"/></svg></button><button class="s"><svg><use href="#magpt"/></svg></button><button class="s"><svg><use href="#mag"/></svg></button>
        <hr>
        <button class="act s"><svg><use href="#camera"/></svg></button><button><svg><use href="#globe"/></svg></button><button class="s"><svg><use href="#lens"/></svg></button>
        <div class="low"><button class="s"><svg><use href="#flip"/></svg></button><button class="s"><svg><use href="#reel"/></svg></button></div>
      </div>
      <div class="view">
        <svg class="scene3d" viewBox="0 0 645 695" preserveAspectRatio="xMidYMid slice">
          <defs>
            <linearGradient id="skyg" x1="0" y1="0" x2="0" y2="1"><stop offset="0" stop-color="#677c88"/><stop offset=".5" stop-color="#93a4ac"/><stop offset="1" stop-color="#c1cac9"/></linearGradient>
            <linearGradient id="gline" gradientUnits="userSpaceOnUse" x1="0" y1="0" x2="0" y2="695"><stop offset="0" stop-color="#8fa0aa" stop-opacity=".06"/><stop offset=".2" stop-color="#768a96" stop-opacity=".4"/><stop offset=".5" stop-color="#738692" stop-opacity=".8"/><stop offset="1" stop-color="#87949b"/></linearGradient>
            <linearGradient id="fz" x1="0" y1="0" x2="1" y2="1"><stop offset="0" stop-color="#545454"/><stop offset="1" stop-color="#3c3c3c"/></linearGradient>
            <linearGradient id="fx" x1="0" y1="0" x2="1" y2="1"><stop offset="0" stop-color="#4c4c4c"/><stop offset="1" stop-color="#656565"/></linearGradient>
            <clipPath id="front"><path d="M176 347l147 89 147-89-10 84-137 97-138-97z"/></clipPath>
          </defs>
          <rect width="645" height="695" fill="url(#skyg)"/>
          <g id="ground" stroke="url(#gline)"></g>
          <path d="M322 199l158 52-158 75-157-75z" fill="#606060"/>
          <path d="M165 251l157 75 1 202-138-97z" fill="url(#fz)"/>
          <path d="M480 251l-158 75 1 202 137-97z" fill="url(#fx)"/>
          <g class="faces">
            <text transform="matrix(.8 .26 -.79 .28 271 252)">Y</text>
            <text transform="matrix(.78 .44 .05 1 212 412)">Z</text>
            <text transform="matrix(.75 -.42 -.02 1 381 438)">X</text>
          </g>
          <g id="over" clip-path="url(#front)" stroke="#8d9498" stroke-opacity=".5"></g>
          <g class="marks"><text x="142" y="450" fill="#5e6b94">z</text><text x="495" y="430" fill="#a8686a">x</text></g>
          <g class="axes"><path d="M21 675V660" stroke="#0f0"/><path d="M21 675l12 5" stroke="#f00"/><path d="M21 675l-11 5" stroke="#00f"/><text x="21" y="659" fill="#0f0">y</text><text x="33" y="681" fill="#f00">x</text><text x="9" y="681" fill="#00f">z</text></g>
        </svg>
        <div class="cams"><button>Persp<svg><use href="#down"/></svg></button><button>No cam<svg><use href="#down"/></svg></button></div>
        <span class="nc">Non-Commercial Edition</span>
      </div>
      <div class="tbar rtb">
        <div class="head r"><svg class="a6 dark"><use href="#right"/></svg></div>
        <button class="act s"><svg><use href="#plane"/></svg></button><button class="s"><svg><use href="#cgrid"/></svg></button><button><svg><use href="#lock"/></svg></button><button><svg><use href="#bulboff"/></svg></button><button class="s"><svg><use href="#disc"/></svg></button><button class="act s"><svg><use href="#bulbon"/></svg></button><button class="s"><svg><use href="#bulbplus"/></svg></button><button class="s"><svg><use href="#bulbring"/></svg></button><button class="act s"><svg><use href="#checker"/></svg></button><button><svg><use href="#glasses"/></svg></button>
        <hr>
        <button><svg><use href="#pt"/></svg></button><button><svg><use href="#norm"/></svg></button><button><svg><use href="#vel"/></svg></button><button class="num">12</button><button><svg><use href="#prim"/></svg></button><button class="num tile">12</button><button><svg><use href="#edge"/></svg></button><button><svg><use href="#uv"/></svg></button><button><svg><use href="#tri"/></svg></button><button><svg><use href="#film"/></svg></button><button class="abc">abc</button>
        <button class="act clip"><svg><use href="#photo"/></svg></button>
        <svg class="tri grey"><use href="#down"/></svg>
      </div>
    </div>
  </section>
  <div class="rail mid-rail"><svg class="a6"><use href="#left"/></svg><i class="dots pale"></i><svg class="a6"><use href="#right"/></svg></div>
  <div class="rightcol">
    <section class="pane params">
      <nav class="ptabs">
        <button class="on w76"><em>geo1</em><svg><use href="#x"/></svg></button><button class="w96">Take List<svg><use href="#x"/></svg></button><button class="w160">Performance Monitor<svg><use href="#x"/></svg></button><svg class="add"><use href="#plus"/></svg>
        <span class="wins"><svg class="win"><use href="#win"/></svg><svg class="tri"><use href="#down"/></svg></span>
      </nav>
      <div class="pathbar">
        <svg class="nav"><use href="#back"/></svg><svg class="nav"><use href="#fwd"/></svg>
        <button class="path"><svg class="clap"><use href="#clap"/></svg>obj<span class="drop"><svg class="tri"><use href="#down"/></svg></span></button>
        <svg class="i20 pin"><use href="#pin"/></svg><svg class="i20"><use href="#target"/></svg>
      </div>
      <div class="nodehead">
        <span class="m"><svg class="i22"><use href="#geo"/></svg></span><label for="nodename">Geometry</label><input id="nodename" value="geo1">
        <span class="m"><svg class="i20"><use href="#gear"/></svg></span><span class="m"><svg class="i20"><use href="#hmark"/></svg></span><svg class="i20"><use href="#search"/></svg><svg class="i20"><use href="#info"/></svg><svg class="i20"><use href="#help"/></svg>
      </div>
      <div class="pbody">
        <div class="pmain">
          <nav class="ftabs"><button class="on w86">Transform</button><button class="w66">Render</button><button class="w48">Misc</button></nav>
          <form class="fields">
            <div class="row tall"><label for="xo">Transform Order</label><span class="sel s154"><select id="xo"><option>Scale Rot Trans</option></select><svg><use href="#updown"/></svg></span><span class="sel s106"><select aria-label="Rotate order"><option>Rx Ry Rz</option></select><svg><use href="#updown"/></svg></span></div>
            <div class="row"><label for="t1">Translate</label><input id="t1" value="0"><input value="0" aria-label="Translate Y"><input value="0" aria-label="Translate Z"><svg><use href="#taxis"/></svg></div>
            <div class="row"><label for="r1">Rotate</label><input id="r1" value="0"><input value="0" aria-label="Rotate Y"><input value="0" aria-label="Rotate Z"><svg><use href="#tring"/></svg></div>
            <div class="row"><label for="s1">Scale</label><input id="s1" value="1"><input value="1" aria-label="Scale Y"><input value="1" aria-label="Scale Z"><svg><use href="#tbox"/></svg></div>
            <div class="row"><label for="pt1">Pivot Translate</label><input id="pt1" value="0"><input value="0" aria-label="Pivot Translate Y"><input value="0" aria-label="Pivot Translate Z"><svg><use href="#tpiv"/></svg></div>
            <div class="row"><label for="pr1">Pivot Rotate</label><input id="pr1" value="0"><input value="0" aria-label="Pivot Rotate Y"><input value="0" aria-label="Pivot Rotate Z"><svg><use href="#tpiv"/></svg></div>
            <div class="row tall"><label for="us">Uniform Scale</label><input id="us" class="short" value="1"><input type="range" min="0" max="1" step=".1" value="1" aria-label="Uniform Scale slider"></div>
            <div class="row tall"><label></label><span class="sel s234 menu"><select aria-label="Modify Pre-Transform"><option>Modify Pre-Transform</option></select><svg class="tri"><use href="#down"/></svg></span></div>
            <div class="row last"><label></label><input type="checkbox" id="keep"><label class="keep" for="keep">Keep Position When Parenting</label></div>
          </form>
        </div>
        <div class="scroll"><div class="thumb"><i class="dots"></i></div><div class="track"></div><div class="sb dim"><svg class="a8"><use href="#up"/></svg></div><div class="sb"><svg class="a8"><use href="#down"/></svg></div></div>
      </div>
    </section>
    <div class="hsplit"></div>
    <section class="pane network">
      <nav class="ptabs">
        <button class="on w70"><em>/obj</em><svg><use href="#x"/></svg></button><button class="w100">Tree View<svg><use href="#x"/></svg></button><button class="w132">Material Palette<svg><use href="#x"/></svg></button><button class="w124">Asset Browser<svg><use href="#x"/></svg></button><svg class="add"><use href="#plus"/></svg>
        <span class="wins"><svg class="win"><use href="#win"/></svg><svg class="tri"><use href="#down"/></svg></span>
      </nav>
      <div class="pathbar">
        <svg class="nav"><use href="#back"/></svg><svg class="nav"><use href="#fwd"/></svg>
        <button class="path"><svg class="clap"><use href="#clap"/></svg>obj<span class="drop"><svg class="tri"><use href="#down"/></svg></span></button>
        <svg class="i20 pin"><use href="#pin"/></svg><svg class="i20"><use href="#target"/></svg>
      </div>
      <div class="menubar">
        <div class="grip2"><svg class="a6 dark"><use href="#up"/></svg></div>
        <button>Add</button><button>Edit</button><button>Go</button><button>View</button><button>Tools</button><button>Layout</button><button>Help</button>
        <span class="ic"><svg><use href="#tools"/></svg><svg><use href="#tree"/></svg><svg><use href="#list"/></svg></span><span class="ic"><svg><use href="#palette"/></svg><svg><use href="#table"/></svg></span><span class="ic"><svg><use href="#netbox"/></svg><svg><use href="#note"/></svg><svg><use href="#pic"/></svg><svg><use href="#package"/></svg></span><span class="ic"><svg><use href="#search"/></svg><svg><use href="#eye"/></svg></span>
      </div>
      <div class="canvas">
        <span class="wm">Non-Commercial Edition</span><b class="wm2">Scene</b>
        <div class="node">
          <svg viewBox="0 0 102 52"><circle cx="50" cy="5" r="4.500" fill="#a3a3a3"/><circle cx="50" cy="48" r="4.500" fill="#a3a3a3"/><rect x="7" y="15" width="94" height="31" rx="7" fill="#e0e0e0"/><rect x="3" y="11" width="95" height="31" rx="6" fill="#ccc" stroke="#ffd21e" stroke-width="2"/><rect x="5" y="13" width="91" height="27" rx="4" fill="#cbcbcb" stroke="#3a3312" stroke-width="1.500"/><path d="M9 14h9l-3 25H9q-3 0-3-3V17q0-3 3-3z" fill="#a6e21e"/><path d="M18 14l-3 25M86 14l-3 25" stroke="#777"/><path d="M86 14h6q3 0 3 3v19q0 3-3 3h-9z" fill="#2d8cff"/></svg>
          <svg class="ngeo"><use href="#geo"/></svg>
          <span>geo1</span>
        </div>
      </div>
      <div class="mark"></div>
    </section>
  </div>
</main>

<footer class="play">
  <div class="edge bottom"><svg class="a8 dark"><use href="#down"/></svg></div>
  <div class="transport"><button><svg><use href="#p-first"/></svg></button><button><svg><use href="#p-prevkey"/></svg></button><button><svg><use href="#p-stepb"/></svg></button><button><svg><use href="#p-playb"/></svg></button><button class="act"><svg><use href="#p-stop"/></svg></button><button><svg><use href="#p-play"/></svg></button><button><svg><use href="#p-stepf"/></svg></button><button><svg><use href="#p-nextkey"/></svg></button><button><svg><use href="#p-last"/></svg></button></div>
  <input class="frame" value="1" aria-label="Current frame">
  <div class="pair"><input value="1" aria-label="Range start"><span>1</span></div>
  <div class="time"><div class="ticks" id="ticks"></div><span class="cur">1</span><div class="range"><i class="nub"></i><i class="nub wide"></i><i class="nub"></i></div></div>
  <div class="pair"><input value="240" aria-label="Range end"><span>240</span></div>
  <button class="keyb"><svg><use href="#key"/></svg></button>
  <div class="opts"><button><svg><use href="#clock"/></svg></button><button><svg><use href="#undo"/></svg></button><button><svg><use href="#speaker"/></svg></button><button><svg><use href="#panel"/></svg></button></div>
</footer>
<div class="status">
  <span class="m side"><svg class="i22"><use href="#brain"/></svg></span><svg class="i20"><use href="#refresh"/></svg>
  <span class="sel auto"><select aria-label="Update mode"><option>Auto Update</option></select><svg><use href="#updown"/></svg></span>
</div>
<div class="under"></div>
<script src="app.js"></script>
</body>
</html>
```
FILE: styles.css
```css
* { box-sizing: border-box; }
body { margin: 0; height: 100vh; min-height: 900px; display: flex; flex-direction: column; overflow: hidden; background: #3a3a3a; color: #ccc; font: 13px/16px "Noto Sans CJK SC", "Noto Sans", sans-serif; }
button, input, select { font: inherit; color: inherit; border: 0; padding: 0; margin: 0; background: none; border-radius: 0; min-width: 0; }
svg { flex: none; display: block; }
.sprite { position: absolute; width: 0; height: 0; }
.a6 { width: 7px; height: 7px; color: #8a8a8a; }
.a8 { width: 8px; height: 7px; color: #8a8a8a; }
.a10 { width: 11px; height: 11px; }
.dark { color: #050505; }
.tri { width: 8px; height: 5px; color: #ddd; }
.i18 { width: 18px; height: 18px; }
.i20 { width: 20px; height: 20px; }
.i22 { width: 22px; height: 22px; }
.dots { display: block; width: 6px; height: 14px; background: radial-gradient(circle, #0c0c0c 1px, transparent 1px) 0 0 / 3px 3px; }
.dots.pale { height: 27px; background-image: radial-gradient(circle, #8a8a8a 1px, transparent 1px); }
.m { position: relative; display: flex; }
.m::after { content: ""; position: absolute; right: -2px; bottom: -3px; border: 4px solid transparent; border-top-color: #9a9a9a; border-bottom: 0; }
.m.side::after { border: 4px solid transparent; border-left-color: #9a9a9a; border-right: 0; }

.shelves { display: flex; flex: none; height: 71px; background: #444; border-bottom: 2px solid #0c0c0c; }
.edge { width: 13px; flex: none; display: flex; justify-content: center; background: linear-gradient(90deg, #3a3a3a, #505050); border-right: 2px solid #080808; }
.shelf { display: flex; flex-direction: column; min-width: 0; }
.shelf-a { flex: 670 1 0; }
.shelf-b { flex: 773 1 0; }
.grip { width: 13px; margin-right: 1px; flex: none; display: flex; align-items: center; justify-content: center; border-right: 2px solid #080808; border-left: 2px solid #080808; }
.stabs { display: flex; height: 17px; background: #2e2e2e; }
.stabs button { height: 17px; flex: none; font-size: 11px; line-height: 14px; padding-bottom: 2px; white-space: nowrap; border-right: 1px solid #080808; border-bottom: 1px solid #111; background: #2d2d2d; }
.stabs .on { background: #4c4c4c; border-bottom-color: #4c4c4c; }
.ridge { width: 15px; background: repeating-linear-gradient(90deg, #111 0 2px, #333 2px 4px); }
.sadd { flex: 1; display: flex; gap: 11px; align-items: center; justify-content: flex-end; padding: 0 6px 2px 0; }
.w47 { width: 47px; } .w48 { width: 49px; } .w51 { width: 51px; } .w53 { width: 53px; } .w54 { width: 54px; } .w56 { width: 56px; } .w57 { width: 57px; } .w58 { width: 58px; } .w60 { width: 60px; } .w66 { width: 66px; } .w86 { width: 85px; }
.tools { flex: 1; display: grid; position: relative; background: linear-gradient(#4b4b4b, #343434); font-size: 11px; line-height: 12px; overflow: hidden; }
.tools-a { grid-template-columns: repeat(9, 55px) 71px 53px; padding-left: 21px; }
.tools-b { grid-template-columns: 62px 62px 70px 58px 92px 74px 81px 82px 64px 51px 40px; padding-left: 17px; }
.tools button { display: flex; flex-direction: column; align-items: center; gap: 3px; padding-top: 3px; white-space: nowrap; }
.tools button svg { width: 32px; height: 30px; }
.tools .two { gap: 0; }
.tools .two svg { height: 27px; }
.tools .two span { margin-top: -3px; }
.tools .cut { align-items: flex-start; padding-left: 9px; }
.tools .cut svg { margin-left: 16px; width: 16px; }
.tools .more { position: absolute; right: 7px; top: 22px; width: 8px; height: 9px; color: #8d8d8d; }

.desk { flex: 1; min-height: 0; display: flex; background: #3a3a3a; }
.rail { width: 9px; flex: none; display: flex; flex-direction: column; align-items: center; justify-content: center; gap: 22px; background: #454545; border-right: 2px solid #222; }
.mid-rail { width: 10px; border-left: 2px solid #0c0c0c; }
.pane { display: flex; flex-direction: column; min-width: 0; min-height: 0; background: #3a3a3a; }
.scene { flex: 714 1 0; }
.rightcol { flex: 736 1 0; min-width: 0; display: flex; flex-direction: column; }
.ptabs { display: flex; flex: none; height: 23px; background: #2e2e2e; }
.ptabs button { flex: none; display: flex; align-items: center; justify-content: space-between; padding: 0 6px 0 8px; white-space: nowrap; border-right: 3px solid #1c1c1c; background: #303030; }
.ptabs .on { background: #4c4c4c; }
.ptabs button svg { width: 7px; height: 7px; }
.ptabs .add { width: 11px; height: 11px; margin: 6px 0 0 9px; }
.wins { margin-left: auto; display: flex; align-items: center; gap: 11px; padding-right: 5px; }
.win { width: 12px; height: 10px; }
.w70 { width: 70px; } .w76 { width: 76px; } .w96 { width: 96px; } .w100 { width: 100px; } .w104 { width: 105px; } .w107 { width: 107px; } .w111 { width: 111px; } .w113 { width: 113px; } .w124 { width: 124px; } .w132 { width: 132px; } .w160 { width: 160px; }
.pathbar { display: flex; flex: none; align-items: center; height: 38px; padding: 0 5px 0 6px; background: linear-gradient(#4c4c4c, #393939); border-bottom: 2px solid #0c0c0c; }
.nav { width: 18px; height: 18px; margin-right: 10px; }
.nav + .nav { margin-right: 12px; }
.path { flex: 1; display: flex; align-items: center; gap: 5px; height: 31px; padding-left: 5px; border: 1px solid #0a0a0a; background: linear-gradient(#474747, #383838); font-size: 15px; color: #ddd; box-shadow: inset 0 1px #555; }
.clap { width: 24px; height: 24px; }
.drop { margin-left: auto; width: 19px; height: 27px; display: flex; align-items: center; justify-content: center; background: #2c2c2c; }
.drop .tri, .tri.grey { color: #8a8a8a; }
.pin { margin: 0 7px 0 12px; }
.vicons { display: flex; align-items: center; gap: 7px; padding: 0 2px 0 20px; }
.viewbar { display: flex; flex: none; align-items: center; height: 41px; padding-right: 6px; background: #2d2d2d; border-bottom: 1px solid #080808; }
.grip2 { align-self: stretch; width: 13px; flex: none; display: flex; justify-content: center; padding-top: 3px; background: #444; border-right: 2px solid #0c0c0c; }
.cam { margin: 0 5px 0 5px; }
.viewbar b { font-size: 14px; color: #e6e6e6; }
.mid { flex: 1; display: flex; gap: 17px; justify-content: center; padding-right: 2px; }
.viewbar > .i20 { margin-left: 8px; }
.stage { flex: 1; min-height: 0; display: flex; }
.tbar { display: flex; flex-direction: column; flex: none; background: #3a3a3a; overflow: hidden; }
.ltb { width: 38px; padding: 0 4px 2px; }
.rtb { width: 32px; align-items: center; padding: 0 2px 0 2px; border-right: 1px solid #333; }
.head { flex: none; height: 12px; align-self: stretch; margin: 0 -4px 8px -3px; display: flex; align-items: center; padding: 0 3px; background: linear-gradient(#555, #333); border: 1px solid #0c0c0c; }
.head.r { justify-content: flex-end; margin: 0 -2px 24px 0; }
.tbar button { position: relative; flex: none; height: 32px; width: 30px; display: flex; align-items: center; justify-content: center; }
.tbar button svg { width: 24px; height: 24px; }
.tbar hr { flex: none; align-self: stretch; height: 1px; margin: 5px 0; border: 0; background: #272727; }
.tbar .s::after { content: ""; position: absolute; right: 0; bottom: 1px; border: 4px solid transparent; border-left-color: #8f8f8f; border-right: 0; }
.tbar .act { background: #b9831d; border: 1px solid #7d5a1c; }
.tbar .act.s::after { border-left-color: #222; }
.modes { background: linear-gradient(#444, #555); box-shadow: 0 0 0 1px #222; margin-bottom: 3px; }
.modes button { height: 28px; border-bottom: 1px solid #111; }
.low { margin-top: auto; }
.low button { height: 30px; }
.rtb button { height: 29px; width: 26px; }
.rtb hr { margin: 3px 0; }
.rtb .num, .rtb .abc { font-size: 12px; font-weight: 700; color: #ddd; }
.rtb .num { padding: 0 0 4px 6px; }
.rtb .num::before { content: ""; position: absolute; left: 2px; bottom: 6px; width: 6px; height: 6px; border-radius: 3px; background: #ddd; }
.rtb .tile::before { width: 15px; height: 9px; border-radius: 0; background: #bbb; clip-path: polygon(0 70%, 40% 0, 100% 0, 90% 100%); }
.rtb .abc { font-weight: 400; }
.rtb .clip { height: 18px; align-items: flex-start; overflow: hidden; margin-top: 2px; }
.rtb .grey { width: 9px; height: 7px; margin-top: 6px; }
.view { flex: 1; min-width: 0; position: relative; overflow: hidden; border-bottom: 1px solid #333; }
.scene3d { position: absolute; inset: 0; width: 100%; height: 100%; }
.faces { font: 700 100px "Noto Sans", sans-serif; fill: #949494; }
.axes { font: 14px "Noto Sans", sans-serif; }
.marks { font: italic 14px "Noto Sans", sans-serif; }
.cams { position: absolute; top: 6px; right: 8px; display: flex; gap: 8px; }
.cams button { display: flex; align-items: center; gap: 2px; height: 24px; padding: 0 7px; border: 2px solid #b0b9be; border-radius: 12px; background: #71828c; color: #f2f2f2; font-size: 14px; }
.cams svg { width: 6px; height: 4px; color: #fff; margin-top: 3px; }
.nc { position: absolute; right: 16px; bottom: 13px; color: #e9ea1f; font-size: 14px; white-space: nowrap; }

.params { flex: 394 1 0; }
.network { flex: 395 1 0; position: relative; background: #303030; padding-top: 4px; }
.hsplit { height: 6px; flex: none; background: #454545; border-top: 1px solid #666; border-bottom: 1px solid #222; }
.nodehead { display: flex; flex: none; align-items: center; height: 31px; gap: 8px; padding: 0 6px; border-bottom: 1px solid #080808; }
.nodehead label { font-weight: 700; font-size: 14px; color: #d5d5d5; margin: 0 -4px 0 -5px; }
input { font-family: "Liberation Mono", monospace; font-size: 15px; color: #eee; background: #131313; border: 1px solid #272727; padding: 3px 0 0 3px; }
.nodehead input { flex: 1; height: 26px; margin-right: -3px; }
.pbody { flex: 1; min-height: 0; display: flex; padding: 2px 2px 0 3px; border-bottom: 1px solid #111; }
.pmain { flex: 1; min-width: 0; overflow: hidden; display: flex; flex-direction: column; }
.ftabs { display: flex; flex: none; height: 27px; margin-top: 1px; }
.ftabs button { border: 1px solid #080808; border-left: 0; background: linear-gradient(#4a4a4a, #333); font-size: 14px; }
.ftabs .on { background: #3a3a3a; border-left: 1px solid #080808; border-bottom: 0; }
.fields { border-top: 1px solid #5a5a5a; padding-top: 4px; font-size: 14px; }
.row { display: flex; align-items: center; gap: 3px; height: 31px; padding-right: 11px; }
.row.tall { height: 33px; }
.row label:first-child { width: 168px; flex: none; margin-right: 14px; text-align: right; white-space: nowrap; }
.row input { flex: 1; height: 27px; }
.row .short { flex: none; width: 110px; }
.row svg { width: 20px; height: 20px; margin-left: 1px; }
.row input[type=checkbox] { appearance: none; flex: none; width: 17px; height: 15px; }
.row.last { height: 25px; }
.row .keep { white-space: nowrap; margin-left: 8px; }
.row input[type=range] { appearance: none; background: none; border: 0; padding: 0; margin: 0 -3px 0 3px; height: 28px; }
input[type=range]::-webkit-slider-runnable-track { height: 6px; background: #0d3a72; border: 1px solid #000; border-top: 2px solid #33527a; border-radius: 3px; }
input[type=range]::-webkit-slider-thumb { appearance: none; width: 6px; height: 28px; margin-top: -13px; background: #4a4a4a; border: 1px solid #000; box-shadow: inset 0 0 0 1px #888; }
.sel { position: relative; display: flex; height: 29px; background: linear-gradient(90deg, transparent calc(100% - 23px), #2f2f2f calc(100% - 23px)), linear-gradient(#565656, #3c3c3c); border: 1px solid #262626; border-bottom-color: #0c0c0c; }
.sel select { appearance: none; width: 100%; padding-left: 16px; outline: 0; }
.sel svg { position: absolute; right: 7px; top: 6px; width: 7px; height: 14px; margin: 0; }
.sel svg.tri { width: 7px; height: 6px; top: 10px; color: #999; }
.s154 { width: 154px; } .s106 { width: 107px; } .s234 { width: 234px; margin-left: 1px; }
.scroll { width: 18px; display: flex; flex-direction: column; border: 1px solid #0c0c0c; background: #262626; }
.thumb { height: 112px; display: flex; align-items: center; justify-content: center; background: linear-gradient(90deg, #585858, #3e3e3e); border-bottom: 1px solid #777; }
.track { flex: 1; }
.sb { height: 24px; display: flex; align-items: center; justify-content: center; border-top: 1px solid #0c0c0c; background: #3e3e3e; }
.sb.dim svg { color: #4d4d4d; }

.menubar { display: flex; flex: none; align-items: center; height: 35px; background: #333; border-bottom: 1px solid #0c0c0c; font-size: 15px; }
.menubar button { margin-left: 19px; color: #d5d5d5; }
.menubar .grip2 + button { margin-left: 11px; }
.ic { display: flex; gap: 8px; margin-left: 14px; }
.ic + .ic { margin-left: 26px; }
.ic svg { width: 20px; height: 20px; }
.canvas { flex: 1; position: relative; overflow: hidden; white-space: nowrap; }
.wm { position: absolute; left: 223px; top: 14px; font-size: 25px; line-height: 34px; color: #434343; }
.wm2 { position: absolute; right: 13px; top: 17px; font-size: 30px; line-height: 34px; color: #505050; }
.node { position: absolute; left: 259px; top: 109px; display: flex; align-items: center; gap: 2px; font-size: 18px; line-height: 22px; color: #ccc; }
.node > svg { width: 102px; height: 52px; }
.node .ngeo { position: absolute; left: 38px; top: 15px; width: 24px; height: 22px; }
.mark { position: absolute; top: -3px; right: 4px; bottom: -7px; left: -4px; border: 5px solid #ed1c24; z-index: 3; }

.play { display: flex; flex: none; height: 60px; background: #2d2d2d; border-top: 1px solid #5a5a5a; border-bottom: 1px solid #080808; }
.edge.bottom { align-items: flex-end; padding-bottom: 3px; }
.transport { display: flex; height: 38px; margin: 9px 2px 0 3px; border: 1px solid #111; }
.transport button { width: 36px; display: flex; align-items: center; justify-content: center; background: linear-gradient(#4c4c4c, #3a3a3a); border-right: 1px solid #111; }
.transport .act { background: #b9831d; }
.transport svg { width: 30px; height: 24px; }
.frame { width: 66px; height: 38px; margin-top: 9px; }
.pair { width: 55px; margin: 8px 0 0 3px; font: 15px/20px "Liberation Mono", monospace; color: #ddd; }
.pair input { width: 100%; height: 21px; display: block; padding-top: 1px; }
.pair span { display: block; padding: 3px 0 0 4px; }
.time { flex: 1; min-width: 0; position: relative; display: flex; flex-direction: column; border-left: 1px solid #111; }
.ticks { flex: 1; position: relative; overflow: hidden; font-size: 12px; color: #bbb; }
.ticks::before { content: ""; position: absolute; left: 0; right: 0; top: 23px; height: 1px; background: #aaa; }
.tick { position: absolute; top: 19px; width: 1px; height: 8px; background: #777; }
.tick.big { top: 17px; height: 12px; background: #ddd; }
.tlabel { position: absolute; top: 3px; }
.cur { position: absolute; left: 0; top: 2px; width: 26px; height: 21px; border: 1px solid #fff; background: #000; color: #fff; text-align: center; font: 15px/19px "Liberation Mono", monospace; }
.range { display: flex; align-items: center; justify-content: space-between; height: 9px; margin-bottom: 2px; padding: 0 5px; background: linear-gradient(#484848, #363636); }
.nub { width: 8px; height: 2px; background: repeating-linear-gradient(90deg, #080808 0 2px, transparent 2px 3px); }
.nub.wide { width: 11px; }
.keyb { width: 37px; height: 38px; margin: 9px 4px 0 2px; display: flex; align-items: center; justify-content: center; background: linear-gradient(#555, #3a3a3a); border: 1px solid #151515; }
.keyb svg { width: 28px; height: 28px; }
.opts { display: flex; height: 30px; margin: 14px 1px 0 0; border: 1px solid #111; }
.opts button { width: 29px; display: flex; align-items: center; justify-content: center; background: linear-gradient(#505050, #3a3a3a); border-right: 1px solid #111; }
.opts svg { width: 22px; height: 22px; }
.status { flex: none; display: flex; align-items: center; justify-content: flex-end; gap: 11px; height: 32px; background: #383838; font-size: 14px; }
.auto { width: 142px; height: 31px; margin-left: -5px; }
.auto select { padding: 0 0 2px 17px; }
.under { flex: none; height: 3px; border-top: 1px solid #aaa; background: linear-gradient(90deg, #173a6e 0 20%, #e8f0f8 21%, #fff 60%, #cfe2f5 80%, #eef); }
```
FILE: app.js
```js
const NS = "http://www.w3.org/2000/svg";

// Camera orbiting the origin: yaw 45deg, pitched down, unit cube at the centre.
const cam = { f: 776, d: 3.738, c: 0.862, s: 0.507, cx: 323, cy: 347 };
const NEAR = 0.6;

function view(x, z) {
  const r = Math.SQRT1_2;
  const u = (x - z) * r, h = -(x + z) * r;
  return { u, v: h * cam.s, w: cam.d + h * cam.c };
}
function segment(a, b, width, parent) {
  let p = view(...a), q = view(...b);
  if (p.w < NEAR && q.w < NEAR) return;
  const cut = (m, n) => {
    const t = (NEAR - m.w) / (n.w - m.w);
    return { u: m.u + (n.u - m.u) * t, v: m.v + (n.v - m.v) * t, w: NEAR };
  };
  if (p.w < NEAR) p = cut(p, q);
  if (q.w < NEAR) q = cut(q, p);
  const el = document.createElementNS(NS, "line");
  el.setAttribute("x1", (cam.cx + cam.f * p.u / p.w).toFixed(1));
  el.setAttribute("y1", (cam.cy - cam.f * p.v / p.w).toFixed(1));
  el.setAttribute("x2", (cam.cx + cam.f * q.u / q.w).toFixed(1));
  el.setAttribute("y2", (cam.cy - cam.f * q.v / q.w).toFixed(1));
  el.setAttribute("stroke-width", width);
  parent.appendChild(el);
}
function grid(parent, reach) {
  const n = reach * 5;
  for (let i = -n; i <= n; i++) {
    const k = i / 5, w = i % 5 === 0 ? 2 : 1;
    segment([k, -reach], [k, reach], w, parent);
    segment([-reach, k], [reach, k], w, parent);
  }
}
grid(document.getElementById("ground"), 14);
grid(document.getElementById("over"), 3);

const ticks = document.getElementById("ticks");
for (let f = 6; f <= 240; f += 6) {
  const left = ((f - 1) / 239.3) * 100 + "%";
  const t = document.createElement("i");
  t.className = f % 24 ? "tick" : "tick big";
  t.style.left = left;
  ticks.appendChild(t);
  if (f % 24 === 0 && f < 240) {
    const l = document.createElement("span");
    l.className = "tlabel";
    l.textContent = f;
    l.style.left = left;
    ticks.appendChild(l);
  }
}
```
